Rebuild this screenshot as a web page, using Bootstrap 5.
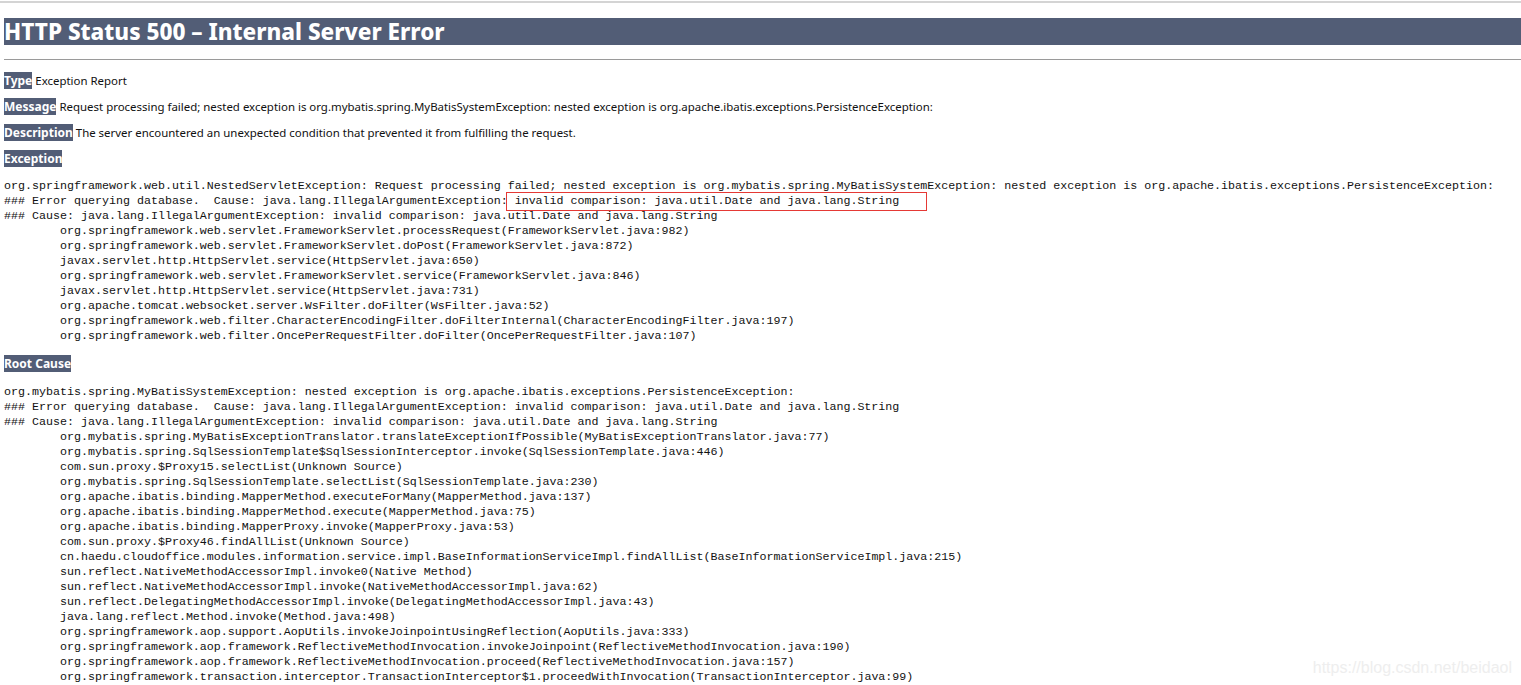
<!doctype html>
<html lang="en">
<head>
<meta charset="utf-8">
<title>HTTP Status 500 – Internal Server Error</title>
<link rel="stylesheet" href="https://cdn.jsdelivr.net/npm/bootstrap@5.3.0/dist/css/bootstrap.min.css">
<style>
html,body{height:685px;overflow:hidden;background:#fff}
body{font-family:"Noto Sans",sans-serif;color:#111;position:relative}
.top-rule{height:2px;margin-top:1px;background:#d4d4d4}
.report{padding-left:4px;padding-top:15px}
.status-title{font-family:"Noto Sans",sans-serif;font-size:22.5px;font-weight:800;line-height:27px;height:27px;margin:0;background:#525d76;color:#fff;white-space:nowrap}
.report-rule{height:1px;margin:14px 0 13px;background:#9a9a9a;opacity:1;border:0}
.info-line{font-size:11.45px;line-height:15px;height:15px;margin:0 0 11px;white-space:nowrap}
.info-line.before-first{margin-bottom:13px}
.info-line.before-root{margin-bottom:14px}
.tag{background:#525d76;color:#fff;font-weight:700;font-size:12px}
.trace{font-family:"Liberation Mono",monospace;font-size:11.67px;line-height:15px;margin:0 0 12px;color:#111;overflow:visible;tab-size:8;white-space:pre}
.flagged{position:relative}
.flagged::after{content:"";position:absolute;left:-2px;right:-28px;top:-2px;bottom:-3px;border:1px solid #e53935}
.watermark{position:absolute;right:9px;top:656px;font-family:"Liberation Sans",sans-serif;font-size:16px;color:#eee;white-space:nowrap}
</style>
</head>
<body>
<div class="top-rule"></div>
<main class="report">
<h1 class="status-title">HTTP Status 500 – Internal Server Error</h1>
<hr class="report-rule">
<p class="info-line"><b class="tag">Type</b> Exception Report</p>
<p class="info-line"><b class="tag">Message</b> Request processing failed; nested exception is org.mybatis.spring.MyBatisSystemException: nested exception is org.apache.ibatis.exceptions.PersistenceException:</p>
<p class="info-line"><b class="tag">Description</b> The server encountered an unexpected condition that prevented it from fulfilling the request.</p>
<p class="info-line before-first"><b class="tag">Exception</b></p>
<pre class="trace">org.springframework.web.util.NestedServletException: Request processing failed; nested exception is org.mybatis.spring.MyBatisSystemException: nested exception is org.apache.ibatis.exceptions.PersistenceException:
### Error querying database.  Cause: java.lang.IllegalArgumentException:<span class="flagged"> invalid comparison: java.util.Date and java.lang.String</span>
### Cause: java.lang.IllegalArgumentException: invalid comparison: java.util.Date and java.lang.String
	org.springframework.web.servlet.FrameworkServlet.processRequest(FrameworkServlet.java:982)
	org.springframework.web.servlet.FrameworkServlet.doPost(FrameworkServlet.java:872)
	javax.servlet.http.HttpServlet.service(HttpServlet.java:650)
	org.springframework.web.servlet.FrameworkServlet.service(FrameworkServlet.java:846)
	javax.servlet.http.HttpServlet.service(HttpServlet.java:731)
	org.apache.tomcat.websocket.server.WsFilter.doFilter(WsFilter.java:52)
	org.springframework.web.filter.CharacterEncodingFilter.doFilterInternal(CharacterEncodingFilter.java:197)
	org.springframework.web.filter.OncePerRequestFilter.doFilter(OncePerRequestFilter.java:107)
</pre>
<p class="info-line before-root"><b class="tag">Root Cause</b></p>
<pre class="trace">org.mybatis.spring.MyBatisSystemException: nested exception is org.apache.ibatis.exceptions.PersistenceException:
### Error querying database.  Cause: java.lang.IllegalArgumentException: invalid comparison: java.util.Date and java.lang.String
### Cause: java.lang.IllegalArgumentException: invalid comparison: java.util.Date and java.lang.String
	org.mybatis.spring.MyBatisExceptionTranslator.translateExceptionIfPossible(MyBatisExceptionTranslator.java:77)
	org.mybatis.spring.SqlSessionTemplate$SqlSessionInterceptor.invoke(SqlSessionTemplate.java:446)
	com.sun.proxy.$Proxy15.selectList(Unknown Source)
	org.mybatis.spring.SqlSessionTemplate.selectList(SqlSessionTemplate.java:230)
	org.apache.ibatis.binding.MapperMethod.executeForMany(MapperMethod.java:137)
	org.apache.ibatis.binding.MapperMethod.execute(MapperMethod.java:75)
	org.apache.ibatis.binding.MapperProxy.invoke(MapperProxy.java:53)
	com.sun.proxy.$Proxy46.findAllList(Unknown Source)
	cn.haedu.cloudoffice.modules.information.service.impl.BaseInformationServiceImpl.findAllList(BaseInformationServiceImpl.java:215)
	sun.reflect.NativeMethodAccessorImpl.invoke0(Native Method)
	sun.reflect.NativeMethodAccessorImpl.invoke(NativeMethodAccessorImpl.java:62)
	sun.reflect.DelegatingMethodAccessorImpl.invoke(DelegatingMethodAccessorImpl.java:43)
	java.lang.reflect.Method.invoke(Method.java:498)
	org.springframework.aop.support.AopUtils.invokeJoinpointUsingReflection(AopUtils.java:333)
	org.springframework.aop.framework.ReflectiveMethodInvocation.invokeJoinpoint(ReflectiveMethodInvocation.java:190)
	org.springframework.aop.framework.ReflectiveMethodInvocation.proceed(ReflectiveMethodInvocation.java:157)
	org.springframework.transaction.interceptor.TransactionInterceptor$1.proceedWithInvocation(TransactionInterceptor.java:99)
</pre>
</main>
<div class="watermark">https://blog.csdn.net/beidaol</div>
<script src="https://cdn.jsdelivr.net/npm/bootstrap@5.3.0/dist/js/bootstrap.bundle.min.js"></script>
</body>
</html>
